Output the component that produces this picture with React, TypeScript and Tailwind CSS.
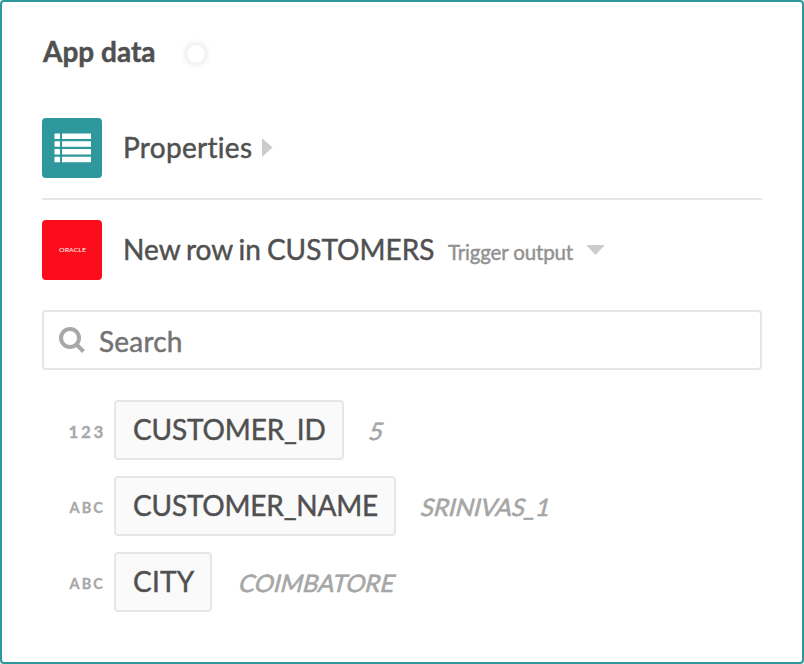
import React from "react";

type Field = { kind: string; name: string; value: string; width: string; gap: string; tracking: string; kindStyle: string };

const fields: Field[] = [
  { kind: "123", name: "CUSTOMER_ID", value: "5", width: "w-[230px]", gap: "ml-[26px]", tracking: "tracking-[-0.15px]", kindStyle: "text-[17px] tracking-[2.6px] -mr-px" },
  { kind: "ABC", name: "CUSTOMER_NAME", value: "SRINIVAS_1", width: "w-[282px]", gap: "ml-[26px]", tracking: "tracking-[-0.2px]", kindStyle: "text-[14.5px] tracking-[2.1px]" },
  { kind: "ABC", name: "CITY", value: "COIMBATORE", width: "w-[98px]", gap: "ml-[28px]", tracking: "tracking-[0.2px]", kindStyle: "text-[14.5px] tracking-[2.1px]" },
];

function ListIcon() {
  return (
    <svg width="37" height="30" viewBox="0 0 37 30" fill="white">
      {[0.5, 8.3, 16, 23.7].map((y) => (
        <g key={y}>
          <rect x="0.5" y={y} width="5.5" height="5.5" rx="0.5" />
          <rect x="8" y={y} width="29" height="5.5" rx="0.5" />
        </g>
      ))}
    </svg>
  );
}

export default function App() {
  return (
    <div className="h-[664px] w-[804px] rounded-[4px] border-2 border-[#2e989d] bg-white px-10 font-['Lato',sans-serif] text-[#505050] [font-variant-ligatures:none] [-webkit-text-stroke:0.45px_currentColor]">
      <header className="flex h-[116px] items-start pt-[29px]">
        <h1 className="ml-px text-[28px] leading-[40px] font-bold">App data</h1>
        <div className="mt-[14px] ml-[31px] h-[18px] w-[18px] rounded-full bg-white shadow-[0_0_8px_rgba(0,0,0,0.16)]" />
      </header>
      <section className="flex h-[82px] items-start border-b-2 border-[#e6e6e6]">
        <div className="flex h-[60px] w-[60px] items-center justify-center rounded-[4px] bg-[#2e989d]">
          <ListIcon />
        </div>
        <span className="ml-[21px] w-[129px] text-[28px] leading-[58px] tracking-[0.3px] whitespace-nowrap">Properties</span>
        <svg className="mt-[20px] ml-[10px]" width="11" height="20"><path d="M0 1.500Q0 0 1 1L10.500 9.500L1 18Q0 19 0 17.500Z" fill="#ccc" /></svg>
      </section>
      <section className="mt-5 flex h-[60px] items-start">
        <div className="flex h-[60px] w-[60px] items-center justify-center rounded-[4px] bg-[#fc0d1b]">
          <span className="ml-px origin-center scale-x-[1.17] scale-y-[0.9] text-[6px] leading-none text-white [-webkit-text-stroke:0]">ORACLE</span>
        </div>
        <span className="ml-[21px] w-[311px] text-[28px] leading-[58px] tracking-[0.02px] whitespace-nowrap [word-spacing:-1.3px]">New row in CUSTOMERS</span>
        <span className="ml-[14px] w-[125px] text-[20.5px] leading-[64px] tracking-[-0.15px] whitespace-nowrap text-[#929292]">Trigger output</span>
        <svg className="mt-[24px] ml-[13px]" width="19" height="12"><path d="M1 1H18Q19 1 18 2L10.500 10Q9.500 11 8.500 10L1 2Q0 1 1 1Z" fill="#ccc" /></svg>
      </section>
      <div className="mt-[30px] flex h-[60px] items-center rounded-[4px] border-2 border-[#e6e6e6] pl-[14px]">
        <svg width="28" height="28" fill="none" stroke="#a8a8a8" strokeWidth="4"><circle cx="12" cy="12" r="9" /><path d="M18.500 18.500L25.500 25.500" /></svg>
        <span className="mt-[2px] ml-[13px] text-[28px] tracking-[0.2px] text-[#737373]">Search</span>
      </div>
      <ul className="mt-[30px] flex flex-col gap-4">
        {fields.map((f) => (
          <li key={f.name} className="flex h-[60px] items-center">
            <span className="flex w-[72px] shrink-0 justify-end pr-[9px] pt-[4px] font-bold text-[#a8a8a8] [-webkit-text-stroke:0.3px_currentColor]">
              <span className={f.kindStyle}>{f.kind}</span>
            </span>
            <span className={`flex h-[60px] shrink-0 items-center rounded-[4px] border-2 border-[#e6e6e6] bg-[#fafafa] pb-[3px] pl-[17px] text-[28px] ${f.tracking} ${f.width}`}>{f.name}</span>
            <em className={`inline-block -skew-x-[14deg] pt-[2px] text-[24px] not-italic text-[#a6a6a6] [-webkit-text-stroke:0.6px_currentColor] ${f.gap}`}>{f.value}</em>
          </li>
        ))}
      </ul>
    </div>
  );
}
